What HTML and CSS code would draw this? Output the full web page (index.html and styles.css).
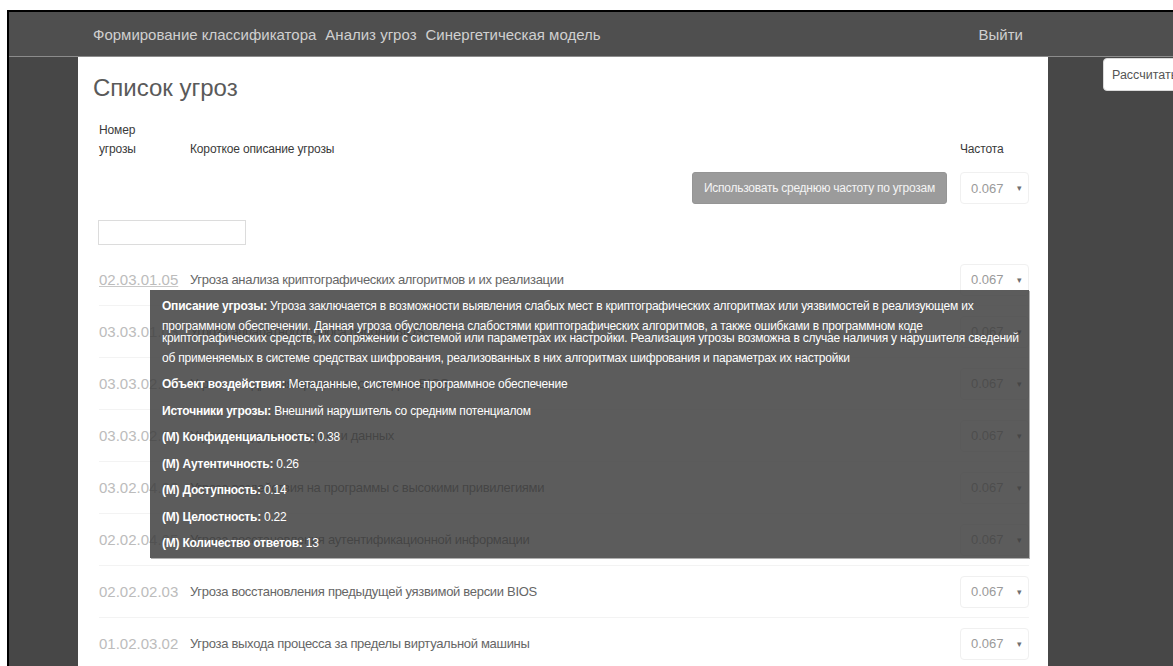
FILE: index.html
```html
<!DOCTYPE html>
<html lang="ru">
<head>
<meta charset="utf-8">
<title>Список угроз</title>
<link rel="stylesheet" href="styles.css">
</head>
<body>
<div class="frame">
  <header class="navbar">
    <div class="nav-inner">
      <nav class="nav-links">
        <a href="#">Формирование классификатора</a>
        <a href="#">Анализ угроз</a>
        <a href="#">Синергетическая модель</a>
      </nav>
      <a class="logout" href="#">Выйти</a>
    </div>
  </header>

  <main class="page">
    <section class="sheet">
      <h1 class="title">Список угроз</h1>

      <div class="threats">
        <div class="grid threat-head">
          <div>Номер<br>угрозы</div>
          <div>Короткое описание угрозы</div>
          <div>Частота</div>
        </div>

        <div class="grid threat-tools">
          <div></div>
          <button class="avg-btn" type="button">Использовать среднюю частоту по угрозам</button>
          <div class="freq"><span>0.067</span><i>▾</i></div>
        </div>

        <div class="filter"><input type="text"></div>

        <div class="threat-list">
          <div class="grid row">
            <a class="code active" href="#">02.03.01.05</a>
            <div class="desc">Угроза анализа криптографических алгоритмов и их реализации</div>
            <div class="freq"><span>0.067</span><i>▾</i></div>
          </div>
          <div class="grid row">
            <a class="code" href="#">03.03.01.03</a>
            <div class="desc">Угроза аппаратного сброса пароля BIOS</div>
            <div class="freq"><span>0.067</span><i>▾</i></div>
          </div>
          <div class="grid row">
            <a class="code" href="#">03.03.02.02</a>
            <div class="desc">Угроза внедрения вредоносного кода в BIOS</div>
            <div class="freq"><span>0.067</span><i>▾</i></div>
          </div>
          <div class="grid row">
            <a class="code" href="#">03.03.02.05</a>
            <div class="desc">Угроза внедрения кода или данных</div>
            <div class="freq"><span>0.067</span><i>▾</i></div>
          </div>
          <div class="grid row">
            <a class="code" href="#">03.02.04.03</a>
            <div class="desc">Угроза воздействия на программы с высокими привилегиями</div>
            <div class="freq"><span>0.067</span><i>▾</i></div>
          </div>
          <div class="grid row">
            <a class="code" href="#">02.02.04.05</a>
            <div class="desc">Угроза восстановления аутентификационной информации</div>
            <div class="freq"><span>0.067</span><i>▾</i></div>
          </div>
          <div class="grid row">
            <a class="code" href="#">02.02.02.03</a>
            <div class="desc">Угроза восстановления предыдущей уязвимой версии BIOS</div>
            <div class="freq"><span>0.067</span><i>▾</i></div>
          </div>
          <div class="grid row">
            <a class="code" href="#">01.02.03.02</a>
            <div class="desc">Угроза выхода процесса за пределы виртуальной машины</div>
            <div class="freq"><span>0.067</span><i>▾</i></div>
          </div>

          <!-- details popup for the hovered threat code -->
          <div class="tip">
            <p class="tip-desc">
              <span><b>Описание угрозы:</b> Угроза заключается в возможности выявления слабых мест в криптографических алгоритмах или уязвимостей в реализующем их</span>
              <span>программном обеспечении. Данная угроза обусловлена слабостями криптографических алгоритмов, а также ошибками в программном коде</span>
              <span class="tight">криптографических средств, их сопряжении с системой или параметрах их настройки. Реализация угрозы возможна в случае наличия у нарушителя сведений</span>
              <span>об применяемых в системе средствах шифрования, реализованных в них алгоритмах шифрования и параметрах их настройки</span>
            </p>
            <p><b>Объект воздействия:</b> Метаданные, системное программное обеспечение</p>
            <p><b>Источники угрозы:</b> Внешний нарушитель со средним потенциалом</p>
            <p><b>(М) Конфиденциальность:</b> 0.38</p>
            <p><b>(М) Аутентичность:</b> 0.26</p>
            <p><b>(М) Доступность:</b> 0.14</p>
            <p><b>(М) Целостность:</b> 0.22</p>
            <p><b>(М) Количество ответов:</b> 13</p>
          </div>
        </div>
      </div>
    </section>
  </main>

  <button class="calc" type="button">Рассчитать</button>
</div>
</body>
</html>
```

FILE: styles.css
```css
html, body {
  margin: 0;
  padding: 0;
  height: 100%;
  overflow: hidden;
  background: #fff;
  font-family: "Liberation Sans", Arial, sans-serif;
}

a {
  text-decoration: none;
  color: inherit;
}

.frame {
  position: relative;
  margin: 10px 0 0 7px;
  height: calc(100vh - 10px);
  border-top: 2px solid #000;
  border-left: 2px solid #000;
  background: #474747;
  overflow: hidden;
}

/* top navigation */
.navbar {
  height: 44px;
  background: #4f4f4f;
  border-bottom: 1px solid #8c8c8c;
}

.nav-inner {
  width: 970px;
  margin-left: 69px;
  box-sizing: border-box;
  padding: 0 15px;
  height: 100%;
  display: flex;
  align-items: center;
  justify-content: space-between;
}

.nav-links {
  display: flex;
  gap: 9px;
}

.nav-links a,
.logout {
  color: #d0d0d0;
  font-size: 15px;
}

.logout {
  padding-right: 10px;
}

/* white content sheet */
.sheet {
  width: 970px;
  margin-left: 69px;
  box-sizing: border-box;
  padding: 16px 15px 0;
  height: 700px;
  background: #fff;
}

.title {
  margin: 0;
  font-size: 24px;
  line-height: 30px;
  font-weight: normal;
  color: #5a5a5a;
}

.threats {
  padding: 0 4px 0 6px;
}

.grid {
  display: grid;
  grid-template-columns: 91px 1fr 69px;
  align-items: center;
}

.threat-head {
  margin-top: 18px;
  align-items: end;
  font-size: 12px;
  line-height: 19px;
  letter-spacing: -0.15px;
  color: #3a3a3a;
}

.threat-tools {
  margin-top: 13px;
  height: 32px;
}

.avg-btn {
  justify-self: end;
  margin-right: 13px;
  height: 32px;
  padding: 0 11px;
  border: 1px solid #959595;
  border-radius: 3px;
  background: #9b9b9b;
  color: #f4f4f4;
  font-family: inherit;
  font-size: 12px;
  letter-spacing: -0.25px;
}

.freq {
  height: 32px;
  box-sizing: border-box;
  border: 1px solid #f0f0f0;
  border-radius: 4px;
  display: flex;
  align-items: center;
  justify-content: space-between;
  padding: 0 6px 0 10px;
  background: #fff;
}

.freq span {
  font-size: 13px;
  color: #9a9a9a;
}

.freq i {
  font-style: normal;
  font-size: 9px;
  color: #707070;
}

.filter {
  margin-top: 16px;
}

.filter input {
  display: block;
  width: 148px;
  height: 25px;
  box-sizing: border-box;
  margin: 0 0 0 -1px;
  border: 1px solid #dcdcdc;
  padding: 0 6px;
}

/* threat rows */
.threat-list {
  position: relative;
  margin-top: 8px;
}

.row {
  height: 52px;
  box-sizing: border-box;
  border-top: 1px solid #f3f3f3;
}

.row:first-child {
  border-top-color: transparent;
}

.code {
  justify-self: start;
  font-size: 15px;
  color: #bcbcbc;
}

.code.active {
  text-decoration: underline;
  text-decoration-color: #c8c8c8;
}

.desc {
  font-size: 13px;
  letter-spacing: -0.3px;
  color: #666;
  white-space: nowrap;
}

/* hover popup with threat details */
.tip {
  position: absolute;
  top: 37px;
  left: 51px;
  right: 0;
  padding: 7px 12px 4px;
  background: rgba(64, 64, 64, 0.85);
  box-shadow: 1px 1px 0 #b0b0b0;
  color: #fff;
  font-size: 12px;
  letter-spacing: -0.22px;
  line-height: 19.5px;
}

.tip p {
  margin: 0 0 7px;
  white-space: nowrap;
}

.tip p:last-child {
  margin-bottom: 0;
}

.tip-desc span {
  display: block;
}

.tip-desc .tight {
  margin-top: -7px;
}

/* floating action on the right */
.calc {
  position: absolute;
  top: 46px;
  left: 1094px;
  width: 90px;
  height: 33px;
  padding: 0 0 0 8px;
  text-align: left;
  background: #fff;
  border: 1px solid #dadada;
  border-radius: 4px;
  color: #555;
  font-family: inherit;
  font-size: 12.5px;
}
```
